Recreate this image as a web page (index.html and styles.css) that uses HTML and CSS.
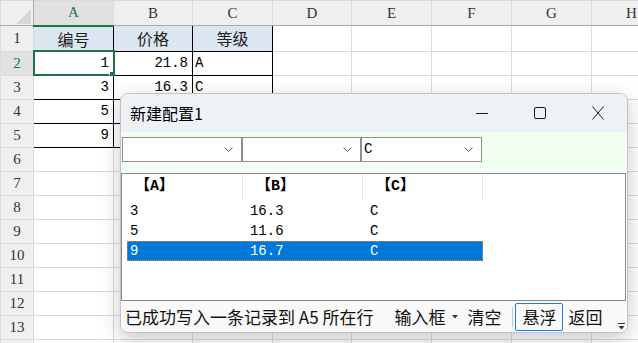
FILE: index.html
```html
<!DOCTYPE html>
<html lang="zh-CN">

<head>
    <meta charset="UTF-8">
    <meta name="viewport" content="width=device-width, initial-scale=1.0">
    <title>新建配置1</title>
    <link rel="stylesheet" href="styles.css">
</head>

<body>
    <div class="screen">
        <!-- Worksheet behind the dialog -->
        <table class="sheet">
            <colgroup>
                <col class="w-rh">
                <col class="w80">
                <col class="w79">
                <col class="w80">
                <col class="w79">
                <col class="w80">
                <col class="w80">
                <col class="w80">
                <col class="w80">
            </colgroup>
            <tr class="col-heads">
                <th class="corner">
                    <svg width="33" height="25" viewBox="0 0 33 25">
                        <polygon points="30,8 30,23 15,23" fill="#d6d6d6" />
                    </svg>
                </th>
                <th class="active-col">A</th>
                <th>B</th>
                <th>C</th>
                <th>D</th>
                <th>E</th>
                <th>F</th>
                <th>G</th>
                <th>H</th>
            </tr>
            <tr>
                <th class="row-head">1</th>
                <td class="bx head-fill">编号</td>
                <td class="bx head-fill">价格</td>
                <td class="bx head-fill">等级</td>
                <td></td><td></td><td></td><td></td><td></td>
            </tr>
            <tr>
                <th class="row-head active-row">2</th>
                <td class="bx num current">1</td>
                <td class="bx num">21.8</td>
                <td class="bx txt">A</td>
                <td></td><td></td><td></td><td></td><td></td>
            </tr>
            <tr>
                <th class="row-head">3</th>
                <td class="bx num">3</td>
                <td class="bx num">16.3</td>
                <td class="bx txt">C</td>
                <td></td><td></td><td></td><td></td><td></td>
            </tr>
            <tr>
                <th class="row-head">4</th>
                <td class="bx num">5</td>
                <td class="bx num">11.6</td>
                <td class="bx txt">C</td>
                <td></td><td></td><td></td><td></td><td></td>
            </tr>
            <tr>
                <th class="row-head">5</th>
                <td class="bx num">9</td>
                <td class="bx num">16.7</td>
                <td class="bx txt">C</td>
                <td></td><td></td><td></td><td></td><td></td>
            </tr>
            <tr><th class="row-head">6</th><td></td><td></td><td></td><td></td><td></td><td></td><td></td><td></td></tr>
            <tr><th class="row-head">7</th><td></td><td></td><td></td><td></td><td></td><td></td><td></td><td></td></tr>
            <tr><th class="row-head">8</th><td></td><td></td><td></td><td></td><td></td><td></td><td></td><td></td></tr>
            <tr><th class="row-head">9</th><td></td><td></td><td></td><td></td><td></td><td></td><td></td><td></td></tr>
            <tr><th class="row-head">10</th><td></td><td></td><td></td><td></td><td></td><td></td><td></td><td></td></tr>
            <tr><th class="row-head">11</th><td></td><td></td><td></td><td></td><td></td><td></td><td></td><td></td></tr>
            <tr><th class="row-head">12</th><td></td><td></td><td></td><td></td><td></td><td></td><td></td><td></td></tr>
            <tr><th class="row-head">13</th><td></td><td></td><td></td><td></td><td></td><td></td><td></td><td></td></tr>
            <tr><th class="row-head"></th><td></td><td></td><td></td><td></td><td></td><td></td><td></td><td></td></tr>
        </table>

        <!-- Floating dialog -->
        <div class="dialog">
            <div class="titlebar">
                <span class="dlg-title">新建配置1</span>
                <div class="win-btns">
                    <span class="win-btn">
                        <svg width="12" height="13" viewBox="0 0 12 13">
                            <path d="M0 6.5H12" stroke="#1a1a1a" stroke-width="1" />
                        </svg>
                    </span>
                    <span class="win-btn">
                        <svg width="12" height="12" viewBox="0 0 12 12">
                            <rect x="0.5" y="0.5" width="11" height="11" rx="1.5" fill="none" stroke="#1a1a1a" stroke-width="1" />
                        </svg>
                    </span>
                    <span class="win-btn">
                        <svg width="12" height="14" viewBox="0 0 12 14">
                            <path d="M0.5 0.5L11.5 13.5M11.5 0.5L0.5 13.5" stroke="#1a1a1a" stroke-width="1" />
                        </svg>
                    </span>
                </div>
            </div>

            <div class="toolbar">
                <div class="combo combo-a">
                    <span class="combo-val"></span>
                    <svg class="chev" width="9" height="5" viewBox="0 0 9 5">
                        <path d="M0.5 0.5L4.5 4.5L8.5 0.5" fill="none" stroke="#606060" />
                    </svg>
                </div>
                <div class="combo combo-b">
                    <span class="combo-val"></span>
                    <svg class="chev" width="9" height="5" viewBox="0 0 9 5">
                        <path d="M0.5 0.5L4.5 4.5L8.5 0.5" fill="none" stroke="#606060" />
                    </svg>
                </div>
                <div class="combo combo-c">
                    <span class="combo-val">C</span>
                    <svg class="chev" width="9" height="5" viewBox="0 0 9 5">
                        <path d="M0.5 0.5L4.5 4.5L8.5 0.5" fill="none" stroke="#606060" />
                    </svg>
                </div>
            </div>

            <div class="list">
                <div class="list-head">
                    <div class="head-cell">【A】</div>
                    <div class="head-cell">【B】</div>
                    <div class="head-cell">【C】</div>
                </div>
                <div class="list-row">
                    <span>3</span><span>16.3</span><span>C</span>
                </div>
                <div class="list-row">
                    <span>5</span><span>11.6</span><span>C</span>
                </div>
                <div class="list-row selected">
                    <span>9</span><span>16.7</span><span>C</span>
                </div>
            </div>

            <div class="statusbar">
                <span class="status-text">已成功写入一条记录到 A5 所在行</span>
                <span class="input-box">输入框</span>
                <span class="drop-mark">
                    <svg width="6" height="4" viewBox="0 0 6 4">
                        <polygon points="0,0 6,0 3,3.5" fill="#333" />
                    </svg>
                </span>
                <span class="clear-btn">清空</span>
                <span class="sep"></span>
                <span class="float-btn">悬浮</span>
                <span class="back-btn">返回</span>
                <span class="more">
                    <svg width="7" height="7" viewBox="0 0 7 7">
                        <path d="M0 0.5H7" stroke="#333" />
                        <polygon points="0.5,3 6.5,3 3.5,6.5" fill="#333" />
                    </svg>
                </span>
            </div>
        </div>
    </div>
</body>

</html>
```

FILE: styles.css
```css
body {
    margin: 0;
    padding: 0;
    background-color: #ffffff;
    font-family: 'Noto Sans CJK SC', sans-serif;
    overflow: hidden;
}

.screen {
    position: relative;
    width: 638px;
    height: 343px;
    overflow: hidden;
}

/* ---------- worksheet ---------- */

.sheet {
    border-collapse: collapse;
    table-layout: fixed;
    width: 671px;
}

.w-rh {
    width: 33px;
}

.w80 {
    width: 80px;
}

.w79 {
    width: 79px;
}

.sheet tr {
    height: 24px;
}

.sheet tr.col-heads {
    height: 25px;
}

.sheet td,
.sheet th {
    padding: 0;
    border: 1px solid #dadada;
    white-space: nowrap;
    overflow: hidden;
}

.col-heads th {
    background-color: #efefef;
    border-bottom: 1px solid #ababab;
    font-family: 'Liberation Serif', serif;
    font-weight: normal;
    font-size: 15px;
    color: #333;
    text-align: center;
}

.col-heads th.corner {
    position: relative;
    border-right: 1px solid #ababab;
}

.corner svg {
    position: absolute;
    left: 0;
    top: 0;
}

.col-heads th.active-col {
    background-color: #e1e1e1;
    color: #217346;
    border-bottom: 2px solid #217346;
}

.row-head {
    background-color: #efefef;
    border-right: 1px solid #ababab;
    font-family: 'Liberation Serif', serif;
    font-weight: normal;
    font-size: 15px;
    color: #333;
    text-align: center;
}

.row-head.active-row {
    background-color: #e1e1e1;
    color: #217346;
}

.sheet td.bx {
    border-color: #000000;
}

.head-fill {
    background-color: #dce6f1;
    text-align: center;
    font-size: 16px;
    color: #222;
}

.num {
    text-align: right;
    padding-right: 4px !important;
    font-family: 'Liberation Mono', monospace;
    font-size: 14px;
}

.txt {
    text-align: left;
    padding-left: 2px !important;
    font-family: 'Liberation Mono', monospace;
    font-size: 14px;
}

.current {
    position: relative;
    outline: 2px solid #217346;
    outline-offset: -1px;
}

.current::after {
    content: "";
    position: absolute;
    right: -3px;
    bottom: -3px;
    width: 5px;
    height: 5px;
    background-color: #217346;
    border: 1px solid #ffffff;
}

/* ---------- dialog ---------- */

.dialog {
    position: absolute;
    left: 120px;
    top: 93px;
    width: 506px;
    height: 238px;
    border: 1px solid #c4c4c4;
    border-radius: 8px;
    background-color: #fafafa;
    box-shadow: 0 6px 20px rgba(0, 0, 0, 0.22);
    display: flex;
    flex-direction: column;
    overflow: hidden;
}

.titlebar {
    height: 38px;
    background-color: #eef2f7;
    display: flex;
    align-items: center;
}

.dlg-title {
    padding-left: 9px;
    font-size: 16px;
    line-height: 20px;
    color: #000;
}

.win-btns {
    margin-left: auto;
    display: flex;
    height: 100%;
}

.win-btn {
    width: 58px;
    display: flex;
    align-items: center;
    justify-content: center;
}

.toolbar {
    height: 34px;
    padding-top: 5px;
    background-color: #f0fff0;
    display: flex;
    align-items: flex-start;
    margin: 0 1px;
}

.combo {
    height: 25px;
    border: 1px solid #8f8f8f;
    background-color: #ffffff;
    display: flex;
    align-items: center;
    padding: 0 8px 0 2px;
    box-sizing: border-box;
}

.combo-a {
    width: 120px;
}

.combo-b {
    width: 119px;
}

.combo-c {
    width: 121px;
}

.combo-val {
    flex: 1;
    font-family: 'Liberation Mono', monospace;
    font-size: 14px;
    line-height: 23px;
}

.chev {
    display: block;
}

.list {
    margin: 2px 1px 0 0;
    height: 126px;
    border: 1px solid #8a8a8a;
    background-color: #ffffff;
    font-family: 'Liberation Mono', 'Noto Sans CJK SC', monospace;
    font-size: 14px;
}

.list-head {
    display: flex;
    height: 26px;
    margin-bottom: 1px;
}

.head-cell {
    width: 120px;
    border-right: 1px solid #e5e5e5;
    box-sizing: border-box;
    padding-left: 13px;
    line-height: 26px;
    font-size: 15px;
    font-weight: bold;
}

.head-cell:first-child {
    width: 121px;
}

.list-row {
    display: flex;
    height: 20px;
    width: 356px;
    margin-left: 5px;
    line-height: 20px;
    box-sizing: border-box;
}

.list-row span {
    width: 120px;
    padding-left: 3px;
}

.list-row span:last-child {
    width: 116px;
}

.list-row.selected {
    background-color: #0078d7;
    color: #ffffff;
    outline: 1px dotted #e38a2c;
    outline-offset: -1px;
}

.statusbar {
    flex: 1;
    display: flex;
    align-items: center;
    background-color: #f9f9f9;
    font-size: 17px;
    line-height: 22px;
    color: #111;
    padding-left: 4px;
}

.status-text {
    white-space: nowrap;
}

.input-box {
    margin-left: 21px;
}

.drop-mark {
    margin-left: 7px;
    display: flex;
    align-items: center;
}

.clear-btn {
    margin-left: 9px;
}

.sep {
    width: 1px;
    height: 20px;
    background-color: #c8c8c8;
    margin-left: 11px;
}

.float-btn {
    margin-left: 2px;
    width: 46px;
    height: 26px;
    border: 1px solid #1a7fd4;
    border-radius: 2px;
    text-align: center;
    line-height: 26px;
}

.back-btn {
    margin-left: 5px;
}

.more {
    margin-left: auto;
    margin-right: 2px;
    align-self: flex-end;
    margin-bottom: 2px;
    display: flex;
}
```
